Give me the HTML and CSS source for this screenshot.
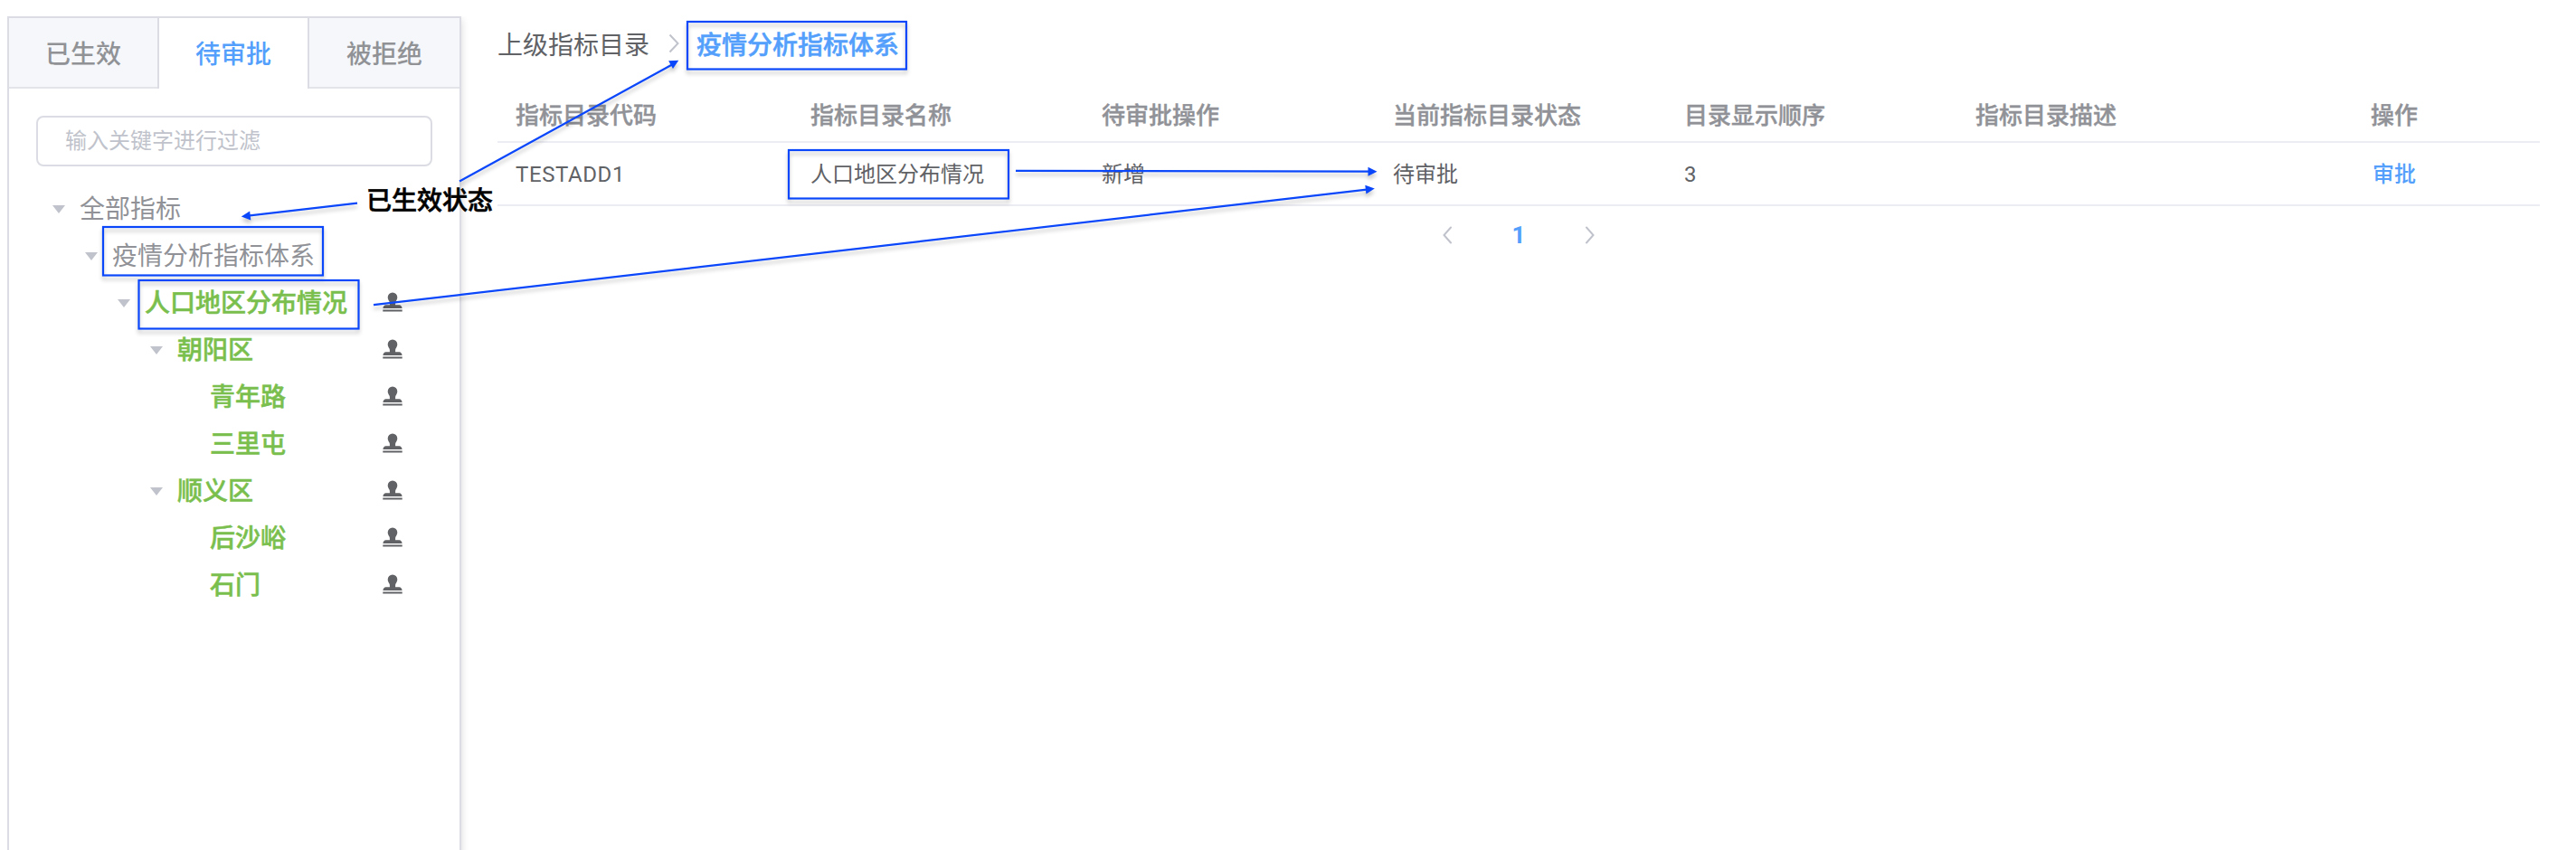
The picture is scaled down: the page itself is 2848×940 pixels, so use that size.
FILE: index.html
```html
<!DOCTYPE html>
<html lang="zh-CN">
<head>
<meta charset="utf-8">
<title>指标目录审批</title>
<link rel="stylesheet" href="styles.css">
</head>
<body>
<svg class="defs" aria-hidden="true">
  <symbol id="stamp" viewBox="0 0 22 22">
    <path d="M11 .5a5.300 5.300 0 0 1 5.300 5.300c0 2.200-1.200 3.700-1.800 4.800-.3.600-.4 1.200-.4 1.900v1.700h4.300c1.600 0 2.800 1.200 3.200 3.800H.4c.4-2.600 1.600-3.800 3.200-3.800h4.300v-1.700c0-.7-.1-1.300-.4-1.900-.6-1.100-1.800-2.600-1.800-4.800A5.300 5.300 0 0 1 11 .5zM.3 19.600h21.400v2H.3z"/>
  </symbol>
</svg>
<div class="page">
  <aside class="panel">
    <nav class="tabs">
      <div class="tab">已生效</div>
      <div class="tab active">待审批</div>
      <div class="tab">被拒绝</div>
    </nav>
    <div class="panel-body">
      <input class="filter" type="text" placeholder="输入关键字进行过滤">
      <ul class="tree">
        <li class="node l0"><i class="caret"></i><span class="label">全部指标</span></li>
        <li class="node l1"><i class="caret"></i><span class="label">疫情分析指标体系</span></li>
        <li class="node l2 pending"><i class="caret"></i><span class="label">人口地区分布情况</span><svg class="stamp"><use href="#stamp"/></svg></li>
        <li class="node l3 pending"><i class="caret"></i><span class="label">朝阳区</span><svg class="stamp"><use href="#stamp"/></svg></li>
        <li class="node l4 pending"><i class="caret leaf"></i><span class="label">青年路</span><svg class="stamp"><use href="#stamp"/></svg></li>
        <li class="node l4 pending"><i class="caret leaf"></i><span class="label">三里屯</span><svg class="stamp"><use href="#stamp"/></svg></li>
        <li class="node l3 pending"><i class="caret"></i><span class="label">顺义区</span><svg class="stamp"><use href="#stamp"/></svg></li>
        <li class="node l4 pending"><i class="caret leaf"></i><span class="label">后沙峪</span><svg class="stamp"><use href="#stamp"/></svg></li>
        <li class="node l4 pending"><i class="caret leaf"></i><span class="label">石门</span><svg class="stamp"><use href="#stamp"/></svg></li>
      </ul>
    </div>
  </aside>
  <main class="content">
    <div class="breadcrumb">
      <span>上级指标目录</span>
      <svg class="sep" viewBox="0 0 12 22"><path d="M1.500 1.500 10.500 11l-9 9.500"/></svg>
      <a class="current">疫情分析指标体系</a>
    </div>
    <div class="table">
      <div class="row head">
        <div>指标目录代码</div><div>指标目录名称</div><div>待审批操作</div><div>当前指标目录状态</div><div>目录显示顺序</div><div>指标目录描述</div><div class="op">操作</div>
      </div>
      <div class="row">
        <div class="code">TESTADD1</div><div>人口地区分布情况</div><div>新增</div><div>待审批</div><div>3</div><div></div><div class="op"><a class="approve">审批</a></div>
      </div>
    </div>
    <div class="pager">
      <svg viewBox="0 0 12 20"><path d="M10 1.500 2.500 10l7.500 8.500"/></svg>
      <span class="num">1</span>
      <svg viewBox="0 0 12 20"><path d="M2 1.500 9.500 10 2 18.500"/></svg>
    </div>
  </main>
  <svg class="marks" viewBox="0 0 2848 940">
    <g class="shadowed">
      <rect x="114" y="251" width="243" height="53.500"/>
      <rect x="153.500" y="310" width="243" height="53.500"/>
      <rect x="760" y="24" width="242" height="52.500"/>
      <rect x="872" y="166" width="243" height="53.500"/>
      <path d="M395 224.600 274 238.700M508 200.500 743 71.500M1123 188.800 1514 189.700M413 337.200 1511 209.600"/>
      <path class="tip" d="M0 0-10-5v10z" transform="translate(266.800 239.600) rotate(173.400)"/>
      <path class="tip" d="M0 0-10-5v10z" transform="translate(750.300 66.800) rotate(-29)"/>
      <path class="tip" d="M0 0-10-5v10z" transform="translate(1522.500 189.800)"/>
      <path class="tip" d="M0 0-10-5v10z" transform="translate(1519.800 208.500) rotate(-6.600)"/>
    </g>
  </svg>
  <div class="note">已生效状态</div>
</div>
</body>
</html>
```
FILE: styles.css
```css
* { box-sizing: border-box; }
body {
  margin: 0;
  background: #fff;
  color: #606266;
  font-family: Roboto, "Noto Sans CJK SC", sans-serif;
}
.defs { position: absolute; width: 0; height: 0; }
.page {
  position: relative;
  display: flex;
  gap: 40px;
  height: 940px;
  padding: 18px 40px 0 8px;
  overflow: hidden;
}

.panel {
  flex: none;
  width: 502px;
  height: 960px;
  border: 2px solid #dcdde4;
  background: #fff;
  box-shadow: 0 4px 8px rgba(0, 0, 0, .12), 0 0 12px rgba(0, 0, 0, .04);
  clip-path: inset(0 -30px 0 0);
}
.tabs { display: flex; height: 78px; }
.tab {
  flex: none;
  width: 164px;
  border-bottom: 2px solid #e3e4ea;
  background: #f5f7fb;
  color: #909296;
  font-size: 28px;
  font-weight: 500;
  line-height: 82px;
  text-align: center;
}
.tab.active {
  width: 168px;
  border: solid #dcdde4;
  border-width: 0 2px;
  background: #fff;
  color: #539ffb;
}
.tab:last-child { width: 166px; }
.panel-body { padding: 30px; }
.filter {
  display: block;
  width: 438px;
  height: 56px;
  padding: 0 30px;
  border: 2px solid #dcdde4;
  border-radius: 8px;
  background: #fff;
  font: 24px/52px Roboto, "Noto Sans CJK SC", sans-serif;
}
.filter::placeholder { color: #c0c3cb; opacity: 1; }
.tree { margin: 20px 0 0; padding: 0; list-style: none; }
.node {
  display: flex;
  align-items: center;
  height: 52px;
  padding-right: 33px;
  color: #909297;
  font-size: 28px;
  line-height: 48px;
}
.label { padding-top: 4px; }
.l0 { padding-left: 18px; }
.l1 { padding-left: 54px; }
.l2 { padding-left: 90px; }
.l3 { padding-left: 126px; }
.l4 { padding-left: 162px; }
.caret {
  width: 14px;
  height: 9px;
  margin: 3px 16px 0 0;
  background: #c0c3cb;
  clip-path: polygon(0 0, 100% 0, 50% 100%);
}
.caret.leaf { visibility: hidden; }
.pending .label {
  color: #7abf4e;
  font-weight: 500;
  -webkit-text-stroke: .5px;
}
.stamp { width: 22px; height: 22px; margin-left: auto; fill: #616266; }

.content { flex: 1; }
.breadcrumb {
  display: flex;
  align-items: center;
  height: 59px;
  font-size: 28px;
}
.sep {
  width: 12px;
  height: 22px;
  margin: 0 19px 0 21px;
  fill: none;
  stroke: #c0c3cb;
  stroke-width: 2;
}
.current {
  color: #539ffb;
  font-weight: 500;
  -webkit-text-stroke: .5px;
}
.table { padding-top: 19px; }
.row {
  display: grid;
  grid-template-columns: 326px repeat(6, 322px);
  height: 70px;
  border-bottom: 2px solid #ecedf4;
  font-size: 24px;
  line-height: 70px;
}
.row > div { padding: 0 20px; }
.row.head {
  height: 62px;
  color: #909297;
  font-size: 26px;
  font-weight: 500;
  line-height: 64px;
  -webkit-text-stroke: .4px;
}
.row .code { letter-spacing: .6px; }
.row .op { text-align: center; }
.approve { color: #539ffb; font-weight: 500; }
.pager {
  display: flex;
  align-items: center;
  justify-content: center;
  gap: 66px;
  height: 64px;
}
.pager svg {
  width: 12px;
  height: 20px;
  fill: none;
  stroke: #c0c3cb;
  stroke-width: 2;
  stroke-linecap: round;
}
.num { color: #539ffb; font-size: 26px; font-weight: 700; }

.marks {
  position: absolute;
  top: 0;
  left: 0;
  width: 2848px;
  height: 940px;
  fill: none;
  stroke: #0a46fa;
  stroke-width: 2.2;
  pointer-events: none;
}
.shadowed { filter: drop-shadow(0 4px 2px rgba(0, 0, 0, .22)); }
.tip { fill: #0a46fa; stroke: none; }
.note {
  position: absolute;
  top: 203px;
  left: 405px;
  color: #000;
  font-size: 28px;
  font-weight: 500;
  line-height: 40px;
  -webkit-text-stroke: .6px;
}
```
